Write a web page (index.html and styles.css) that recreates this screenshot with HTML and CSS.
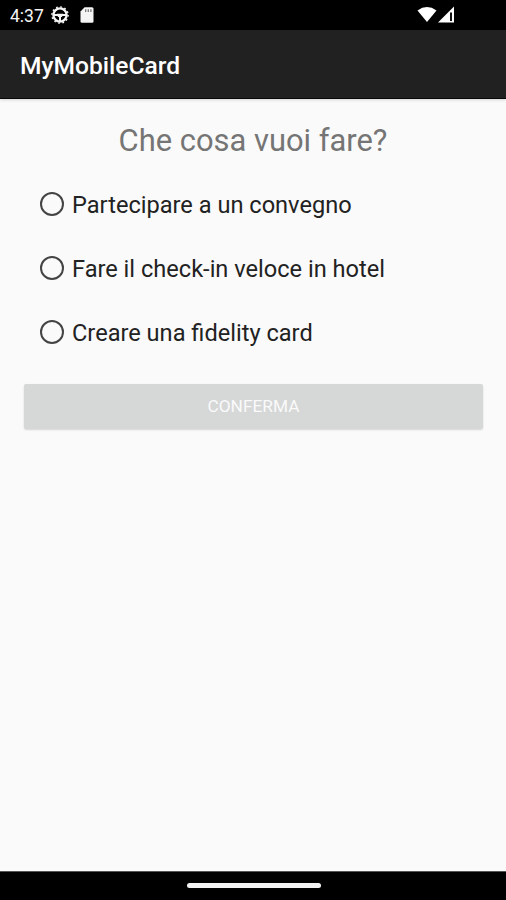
FILE: index.html
```html
<!DOCTYPE html>
<html lang="it">
<head>
<meta charset="utf-8">
<title>MyMobileCard</title>
<link rel="stylesheet" href="styles.css">
</head>
<body>
<div class="status">
  <span class="time">4:37</span>
  <svg class="debug" width="20" height="20" viewBox="0 0 20 20" fill="none" stroke="#f4f4f4">
    <circle cx="10" cy="10" r="6.600" stroke-width="2.300"/>
    <circle cx="10" cy="10" r="8.100" stroke-width="1.500" stroke-dasharray="1.700 2.541"/>
    <path d="M4 10h12M10 10v6" stroke-width="2"/>
    <path d="M7 8.700h6l-1 3.300H8z" fill="#f4f4f4" stroke="none"/>
  </svg>
  <svg class="card" width="14" height="16" viewBox="0 0 14 16">
    <path d="M4.600.3H12q1.500 0 1.500 1.500v12.400q0 1.500-1.500 1.500H2Q.5 15.700.5 14.200V4.500z" fill="#f4f4f4"/>
    <path d="M5.700 2.200v2.800M8.300 2.200v2.800M10.900 2.200v2.800" stroke="#777" stroke-width="1.300"/>
  </svg>
  <svg class="signal" width="38" height="18" viewBox="0 0 38 18">
    <path d="M.5 4.500Q10 -2.300 19.500 4.500L10 16z" fill="#fff"/>
    <path d="M37 .5V16.500H21z" fill="#fff"/>
    <path d="M33 6.500h2v8.500h-2z" fill="#111"/>
  </svg>
</div>
<header class="toolbar"><h1>MyMobileCard</h1></header>
<main>
  <h2>Che cosa vuoi fare?</h2>
  <div class="options">
    <label><i class="radio"></i><span>Partecipare a un convegno</span></label>
    <label><i class="radio"></i><span>Fare il check-in veloce in hotel</span></label>
    <label><i class="radio"></i><span>Creare una fidelity card</span></label>
  </div>
  <button type="button">CONFERMA</button>
</main>
<footer><div class="handle"></div></footer>
</body>
</html>
```
FILE: styles.css
```css
* { box-sizing: border-box; }
body {
  margin: 0;
  height: 900px;
  display: flex;
  flex-direction: column;
  background: #fafafa;
  font-family: Roboto, "Liberation Sans", sans-serif;
  overflow: hidden;
}
.status {
  height: 30px;
  flex: none;
  display: flex;
  align-items: center;
  padding: 0 51px 0 10px;
  background: #000;
  color: #f4f4f4;
}
.time { width: 40px; font-size: 17.500px; line-height: 30px; padding-top: 2px; }
.card { margin-left: 10px; }
.signal { margin-left: auto; }
.toolbar {
  height: 69px;
  flex: none;
  display: flex;
  align-items: center;
  padding: 3px 20px 0;
  background: #212121;
  border-bottom: 1px solid #080808;
  box-shadow: 0 1px 3px rgba(0, 0, 0, .15);
}
h1 { margin: 0; color: #fff; font-size: 24.600px; line-height: 30px; font-weight: 500; }
main { flex: 1; padding: 22px 24px 0; }
h2 {
  margin: 0;
  height: 40px;
  text-align: center;
  font-size: 30.900px;
  line-height: 40px;
  font-weight: 400;
  color: #757575;
}
.options { margin-top: 11px; padding-left: 16px; }
label {
  height: 64px;
  display: flex;
  align-items: center;
  gap: 8px;
  font-size: 23.600px;
  line-height: 30px;
  color: #222;
  white-space: nowrap;
}
label span { padding-top: 2px; }
.radio { width: 24px; height: 24px; border: 2px solid #444; border-radius: 50%; flex: none; }
button {
  display: block;
  width: 459px;
  height: 45px;
  margin: 20px 0 0;
  padding: 0;
  border: 0;
  border-radius: 2px;
  background: #d6d7d7;
  box-shadow: 0 1px 2px rgba(0, 0, 0, .15);
  color: #fafafa;
  font: 400 17.300px/45px Roboto, "Liberation Sans", sans-serif;
}
footer {
  height: 29px;
  flex: none;
  display: flex;
  justify-content: center;
  padding: 11px 0 0 1px;
  background: #000;
  border-top: 1px solid #555;
}
.handle { width: 134px; height: 5px; border-radius: 3px; background: #f2f2f2; }
```
